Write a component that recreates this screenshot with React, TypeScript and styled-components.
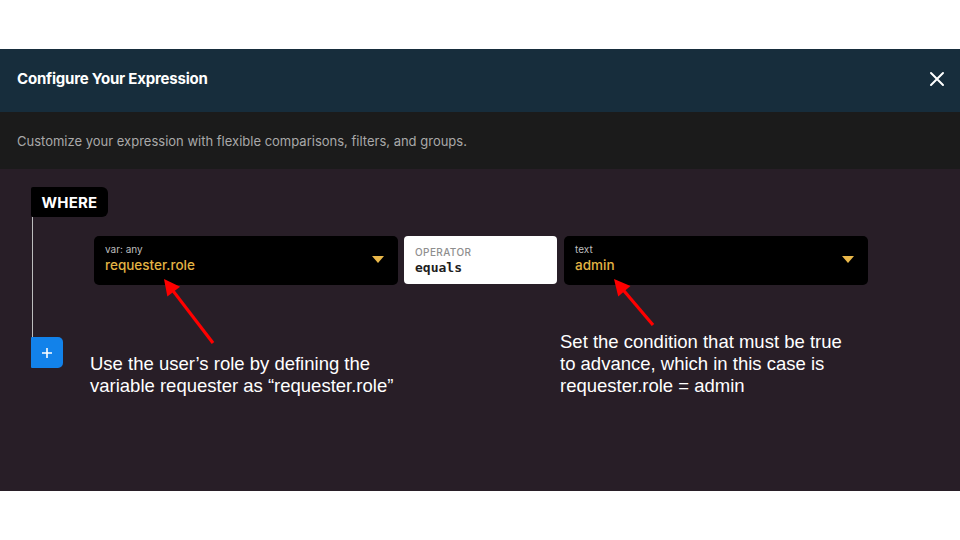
import React from "react";
import styled, { createGlobalStyle } from "styled-components";

const Global = createGlobalStyle`
  html, body { margin: 0; padding: 0; background: #ffffff; }
  body { font-family: Inter, "Noto Sans", sans-serif; }
  * { box-sizing: border-box; }
`;

const Page = styled.div`
  width: 960px;
  height: 540px;
  padding-top: 49px;
  background: #ffffff;
`;

const Modal = styled.div`
  width: 960px;
  display: flex;
  flex-direction: column;
`;

const Header = styled.div`
  height: 63px;
  background: #172d3c;
  display: flex;
  align-items: center;
  justify-content: space-between;
  padding: 0 14px 4px 17px;
`;

const Title = styled.h1`
  margin: 0;
  font-size: 15px;
  font-weight: 700;
  color: #ffffff;
  letter-spacing: -0.2px;
`;

const CloseButton = styled.button`
  border: 0;
  background: transparent;
  padding: 0;
  width: 18px;
  height: 18px;
  display: flex;
  align-items: center;
  justify-content: center;
  color: #ffffff;
`;

const Description = styled.div`
  height: 57px;
  background: #1b1b1b;
  display: flex;
  align-items: center;
  padding-left: 17px;
  font-size: 13px;
  color: #a9a9a9;
`;

const Body = styled.div`
  position: relative;
  height: 322px;
  background: #281e27;
  padding: 18px 0 0 31px;
`;

const WhereBadge = styled.div`
  width: 77px;
  height: 30px;
  background: #000000;
  color: #ffffff;
  font-weight: 700;
  font-size: 15px;
  display: flex;
  align-items: center;
  justify-content: center;
  border-radius: 2px 6px 6px 2px;
  letter-spacing: 0.2px;
`;

const Group = styled.div`
  margin-left: 1px;
  border-left: 1px solid #bdbdbd;
  padding: 19px 0 52px 61px;
`;

const Row = styled.div`
  display: flex;
  gap: 6px;
  align-items: flex-start;
`;

const Select = styled.div<{ $w: number }>`
  width: ${(p) => p.$w}px;
  height: 49px;
  background: #000000;
  border-radius: 5px;
  display: flex;
  align-items: center;
  justify-content: space-between;
  padding: 0 14px 4px 11px;
`;

const FieldText = styled.div`
  display: flex;
  flex-direction: column;
  gap: 1px;
`;

const SmallLabel = styled.span`
  font-size: 10px;
  color: #bdbdbd;
  line-height: 12px;
`;

const Value = styled.span`
  font-size: 13.5px;
  font-weight: 500;
  color: #e3b444;
  line-height: 18px;
`;

const Caret = styled.span`
  width: 0;
  height: 0;
  border-left: 6px solid transparent;
  border-right: 6px solid transparent;
  border-top: 7px solid #eab84a;
  margin-top: 2px;
`;

const Operator = styled.div`
  width: 153px;
  height: 48px;
  margin-right: 1px;
  background: #ffffff;
  border-radius: 4px;
  display: flex;
  flex-direction: column;
  justify-content: center;
  padding: 2px 0 0 11px;
  gap: 1px;
`;

const OpLabel = styled.span`
  font-size: 10px;
  font-weight: 500;
  color: #8e8e8e;
  letter-spacing: 0.4px;
  line-height: 12px;
`;

const OpValue = styled.span`
  font-family: "DejaVu Sans Mono", "Liberation Mono", monospace;
  font-size: 13px;
  font-weight: 700;
  color: #1e1e1e;
  line-height: 17px;
`;

const AddButton = styled.button`
  width: 32px;
  height: 31px;
  border: 0;
  padding: 0;
  background: #1282ea;
  border-radius: 1px 5px 5px 1px;
  display: flex;
  align-items: center;
  justify-content: center;
`;

const Annotation = styled.div<{ $left: number; $top: number }>`
  position: absolute;
  left: ${(p) => p.$left}px;
  top: ${(p) => p.$top}px;
  font-family: "Liberation Sans", Arial, sans-serif;
  font-size: 18.5px;
  line-height: 22px;
  color: #ffffff;
  white-space: nowrap;
`;

const ArrowLayer = styled.svg`
  position: absolute;
  left: 0;
  top: 0;
  pointer-events: none;
`;

function Arrow({ x1, y1, x2, y2 }: { x1: number; y1: number; x2: number; y2: number }) {
  const dx = x2 - x1;
  const dy = y2 - y1;
  const len = Math.hypot(dx, dy);
  const ux = dx / len;
  const uy = dy / len;
  const head = 16;
  const half = 8;
  const bx = x2 - ux * head;
  const by = y2 - uy * head;
  const px = -uy;
  const py = ux;
  return (
    <g>
      <line x1={x1} y1={y1} x2={bx + ux * 2} y2={by + uy * 2} stroke="#ff0000" strokeWidth={3.2} />
      <polygon
        points={`${x2},${y2} ${bx + px * half},${by + py * half} ${bx - px * half},${by - py * half}`}
        fill="#ff0000"
      />
    </g>
  );
}

export default function App() {
  return (
    <>
      <Global />
      <Page>
        <Modal>
          <Header>
            <Title>Configure Your Expression</Title>
            <CloseButton aria-label="Close">
              <svg width="16" height="16" viewBox="0 0 16 16">
                <path d="M2 2 L14 14 M14 2 L2 14" stroke="#ffffff" strokeWidth="2" strokeLinecap="round" />
              </svg>
            </CloseButton>
          </Header>
          <Description>Customize your expression with flexible comparisons, filters, and groups.</Description>
          <Body>
            <WhereBadge>WHERE</WhereBadge>
            <Group>
              <Row>
                <Select $w={304}>
                  <FieldText>
                    <SmallLabel>var: any</SmallLabel>
                    <Value>requester.role</Value>
                  </FieldText>
                  <Caret />
                </Select>
                <Operator>
                  <OpLabel>OPERATOR</OpLabel>
                  <OpValue>equals</OpValue>
                </Operator>
                <Select $w={304}>
                  <FieldText>
                    <SmallLabel>text</SmallLabel>
                    <Value>admin</Value>
                  </FieldText>
                  <Caret />
                </Select>
              </Row>
            </Group>
            <AddButton aria-label="Add">
              <svg width="12" height="12" viewBox="0 0 12 12">
                <path d="M6 1 V11 M1 6 H11" stroke="#ffffff" strokeWidth="1.6" />
              </svg>
            </AddButton>
            <ArrowLayer width="960" height="322">
              <Arrow x1={213} y1={174} x2={164} y2={110} />
              <Arrow x1={653} y1={156} x2={614} y2={110} />
            </ArrowLayer>
            <Annotation $left={90} $top={184}>
              Use the user’s role by defining the
              <br />
              variable requester as “requester.role”
            </Annotation>
            <Annotation $left={560} $top={162}>
              Set the condition that must be true
              <br />
              to advance, which in this case is
              <br />
              requester.role = admin
            </Annotation>
          </Body>
        </Modal>
      </Page>
    </>
  );
}
